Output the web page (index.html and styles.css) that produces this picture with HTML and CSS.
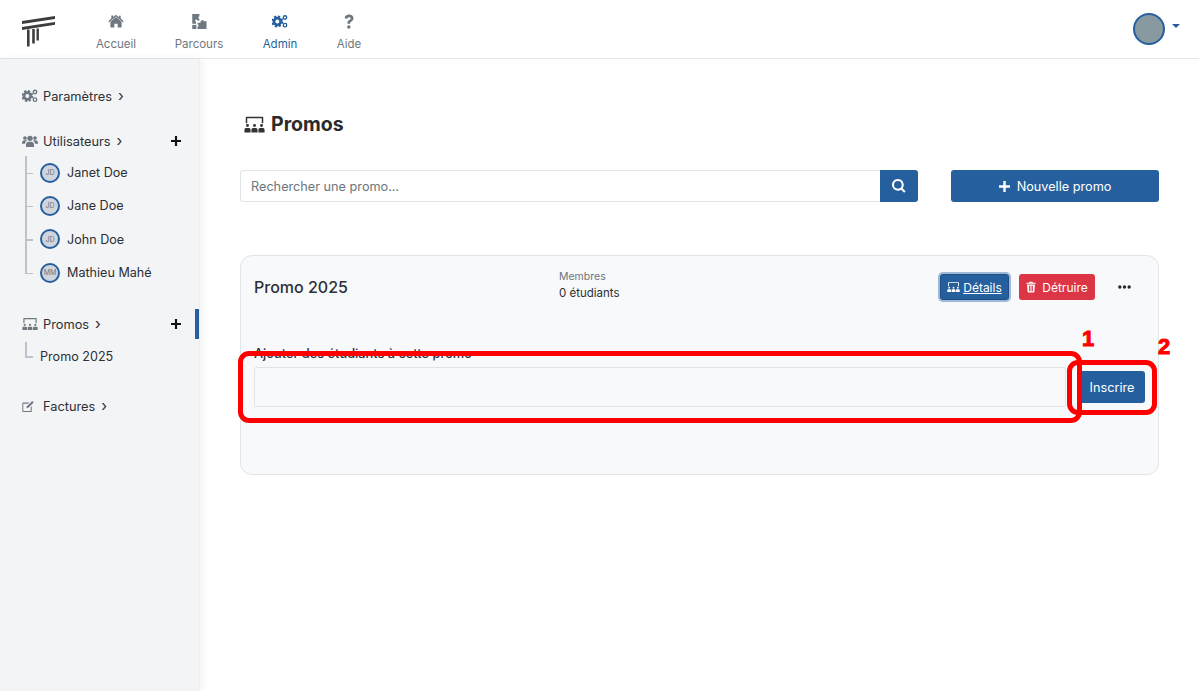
FILE: index.html
```html
<!DOCTYPE html>
<html lang="fr">
<head>
   <meta charset="UTF-8">
   <meta name="viewport" content="width=device-width, initial-scale=1.0">
   <title>Promos</title>
   <link rel="stylesheet" href="styles.css">
</head>
<body class="body">
   <svg class="icon-defs" aria-hidden="true">
      <symbol id="i-home" viewBox="0 0 24 20"><path d="M12 3.400 3.600 10.500V18a1 1 0 0 0 1 1h4.900v-5.600h5V19h4.900a1 1 0 0 0 1-1v-7.500Z"/><path d="M12 0 8 3.300V1.200H5v4.600L.4 9.700l1.300 1.500L12 2.600l10.300 8.600 1.300-1.500L19 5.800V1.500h-2.500v2.200Z" transform="translate(0 -.2)"/></symbol>
      <symbol id="i-route" viewBox="0 0 20 20"><path d="M1 0h9.500v3.500c-1.800-.4-1.800 3 0 2.700v2.300H7.500c.4-1.500-2.800-1.500-2.500 0 0 .8.300 1.500 1 2V13H1Z"/><path d="M12 9.500h1.300c-.4-1.800 3-1.800 2.800 0H20V20H8v-3.200c1.600.4 2.400-2.800 0-2.800V11.500h4Z"/><path d="M1 14.500h5.500V20H1Z"/></symbol>
      <symbol id="i-cogs" viewBox="0 0 24 20">
         <circle cx="8" cy="10" r="5" fill="none" stroke="currentColor" stroke-width="4"/>
         <circle cx="8" cy="10" r="7.500" fill="none" stroke="currentColor" stroke-width="3" stroke-dasharray="3.400 2.490"/>
         <circle cx="19.500" cy="4" r="2.600" fill="none" stroke="currentColor" stroke-width="2"/>
         <circle cx="19.500" cy="15.500" r="2.600" fill="none" stroke="currentColor" stroke-width="2"/>
      </symbol>
      <symbol id="i-help" viewBox="0 0 14 20"><path d="M1 5.600C1.600 2.400 4 .8 7.200.8c3.300 0 5.800 2 5.800 5 0 2.400-1.400 3.500-3 4.500-1 .6-1.300 1-1.300 1.900v.8H5v-1.200c0-1.800.8-2.800 2.200-3.700 1.200-.7 2-1.200 2-2.200 0-1.100-.9-1.700-2-1.700-1.300 0-2 .7-2.500 2.100Z"/><circle cx="6.800" cy="17.200" r="2.300"/></symbol>
      <symbol id="i-users" viewBox="0 0 24 18"><circle cx="4.500" cy="4.500" r="2.800"/><circle cx="19.500" cy="4.500" r="2.800"/><circle cx="12" cy="5" r="4"/><path d="M6 18v-3.500C6 11.500 8 10 10 10h4c2 0 4 1.500 4 4.500V18Z"/><path d="M0 12c0-2.500 1.500-4 3.500-4H6c.6 0 1 .2 1.500.5C5.800 9.500 4.700 11 4.400 13H0ZM24 12c0-2.500-1.500-4-3.500-4H18c-.6 0-1 .2-1.500.5 1.700 1 2.800 2.500 3.100 4.500H24Z"/></symbol>
      <symbol id="i-promo" viewBox="0 0 24 18">
         <path d="M3 0h18a1 1 0 0 1 1 1v6.500h-1.700V1.800H3.700V7.500H2V1a1 1 0 0 1 1-1Z"/>
         <circle cx="4" cy="10.200" r="1.700"/><circle cx="12" cy="10.200" r="1.700"/><circle cx="20" cy="10.200" r="1.700"/>
         <path d="M.5 18v-3c0-1.200.8-2 1.700-2h3.600c.9 0 1.700.8 1.700 2v3ZM8.500 18v-3c0-1.200.8-2 1.700-2h3.600c.9 0 1.700.8 1.700 2v3ZM16.500 18v-3c0-1.200.8-2 1.700-2h3.600c.9 0 1.700.8 1.700 2v3Z"/>
      </symbol>
      <symbol id="i-edit" viewBox="0 0 20 18"><path d="M2 3h9L9.500 4.600H2.700a.6.600 0 0 0-.7.700v10a.6.600 0 0 0 .7.700h10a.6.600 0 0 0 .7-.7V10l1.600-1.600v7.100A1.500 1.500 0 0 1 13.500 17.500h-11.500A1.500 1.500 0 0 1 .5 16V4.500A1.500 1.500 0 0 1 2 3Z"/><path d="M15.800.6 18 2.800 9.800 11l-2.800.6.600-2.800Z"/></symbol>
      <symbol id="i-trash" viewBox="0 0 14 16"><path d="M.5 2h3.800l.7-1.500h4L9.700 2h3.800v1.600H.5ZM1.500 4.600h11l-.8 10a1.200 1.200 0 0 1-1.200 1.100h-7a1.200 1.200 0 0 1-1.200-1.100Zm2.700 1.600v7.800h1.200V6.200Zm2.200 0v7.800h1.200V6.200Zm2.200 0v7.800h1.200V6.200Z" fill-rule="evenodd"/></symbol>
      <symbol id="i-search" viewBox="0 0 16 16"><path d="M6.700 0a6.700 6.700 0 0 1 5.400 10.600l3.500 3.500-1.700 1.700-3.500-3.500A6.700 6.700 0 1 1 6.700 0Zm0 2.300a4.400 4.400 0 1 0 0 8.800 4.400 4.400 0 0 0 0-8.800Z" fill-rule="evenodd"/></symbol>
      <symbol id="i-plus" viewBox="0 0 12 12"><path d="M4.700 0h2.600v4.700H12v2.600H7.300V12H4.700V7.300H0V4.700h4.700Z"/></symbol>
      <symbol id="i-dots" viewBox="0 0 14 4"><circle cx="2" cy="2" r="1.800"/><circle cx="7" cy="2" r="1.800"/><circle cx="12" cy="2" r="1.800"/></symbol>
      <symbol id="i-logo" viewBox="0 0 35 31"><path d="M1 5 34 0v3L1 8ZM1 11 34 6v2.800L1 14Z"/><path d="M6 13.500h2.600V30.500H6ZM11.200 13h2.600v14.500h-2.600ZM15.500 12.500h2.400V24.500h-2.400Z"/></symbol>
   </svg>

   <header class="topbar">
      <svg class="logo"><use href="#i-logo"/></svg>
      <nav class="topnav">
         <a class="topnav-item item-accueil"><svg class="topnav-icon"><use href="#i-home"/></svg>Accueil</a>
         <a class="topnav-item item-parcours"><svg class="topnav-icon"><use href="#i-route"/></svg>Parcours</a>
         <a class="topnav-item item-admin active"><svg class="topnav-icon"><use href="#i-cogs"/></svg>Admin</a>
         <a class="topnav-item item-aide"><svg class="topnav-icon"><use href="#i-help"/></svg>Aide</a>
      </nav>
      <div class="profile">
         <span class="profile-photo"></span>
         <span class="profile-caret"></span>
      </div>
   </header>

   <div class="layout">
      <aside class="sidebar">
         <div class="side-group group-settings">
            <div class="side-title"><svg class="side-icon"><use href="#i-cogs"/></svg>Paramètres<span class="chevron">›</span></div>
         </div>

         <div class="side-group group-users">
            <div class="side-title"><svg class="side-icon"><use href="#i-users"/></svg>Utilisateurs<span class="chevron">›</span><svg class="side-plus"><use href="#i-plus"/></svg></div>
            <ul class="tree">
               <li class="tree-row"><span class="avatar">JD</span>Janet Doe</li>
               <li class="tree-row"><span class="avatar">JD</span>Jane Doe</li>
               <li class="tree-row"><span class="avatar">JD</span>John Doe</li>
               <li class="tree-row"><span class="avatar">MM</span>Mathieu Mahé</li>
            </ul>
         </div>

         <div class="side-group group-promos">
            <span class="side-marker"></span>
            <div class="side-title"><svg class="side-icon"><use href="#i-promo"/></svg>Promos<span class="chevron">›</span><svg class="side-plus"><use href="#i-plus"/></svg></div>
            <ul class="tree tree-plain">
               <li class="tree-row">Promo 2025</li>
            </ul>
         </div>

         <div class="side-group group-bills">
            <div class="side-title"><svg class="side-icon icon-edit"><use href="#i-edit"/></svg>Factures<span class="chevron">›</span></div>
         </div>
      </aside>

      <main class="content">
         <h1 class="page-title"><svg class="page-icon"><use href="#i-promo"/></svg>Promos</h1>

         <div class="toolbar">
            <div class="search">
               <input class="search-input" type="text" placeholder="Rechercher une promo...">
               <button class="btn search-button"><svg class="icon-search"><use href="#i-search"/></svg></button>
            </div>
            <button class="btn new-button"><svg class="icon-plus"><use href="#i-plus"/></svg>Nouvelle promo</button>
         </div>

         <section class="card">
            <div class="card-head">
               <div class="card-name">Promo 2025</div>
               <div class="card-members">
                  <div class="members-label">Membres</div>
                  <div class="members-count">0 étudiants</div>
               </div>
               <div class="card-actions">
                  <button class="btn small-button details-button"><svg class="icon-small"><use href="#i-promo"/></svg><span class="underline">Détails</span></button>
                  <button class="btn small-button delete-button"><svg class="icon-trash"><use href="#i-trash"/></svg>Détruire</button>
                  <svg class="icon-dots"><use href="#i-dots"/></svg>
               </div>
            </div>

            <label class="enroll-label">Ajouter des étudiants à cette promo</label>
            <div class="enroll-row">
               <div class="enroll-input"></div>
               <button class="btn enroll-button">Inscrire</button>
            </div>
         </section>
      </main>
   </div>

   <!-- Red marks drawn over the screenshot -->
   <div class="mark mark-one"></div>
   <div class="mark mark-two"></div>
   <span class="mark-number number-one">1</span>
   <span class="mark-number number-two">2</span>
</body>
</html>
```

FILE: styles.css
```css
:root {
   --color-primary: #255f9e;
   --color-danger: #dc3545;
   --color-text: #212529;
   --color-muted: #6c757d;
   --color-mark: #fe0000;
   --background-side: #f3f4f6;
   --background-card: #f8f9fb;
   --border-light: #e1e4e8;
}

* { box-sizing: border-box; }

.body { margin: 0; height: 691px; overflow: hidden; background-color: white; color: var(--color-text); font-family: Inter, "Liberation Sans", sans-serif; font-size: 13px; }
.icon-defs { display: none; }
svg { fill: currentColor; }

/* top bar */
.topbar { display: flex; align-items: center; height: 59px; padding-left: 21px; border-bottom: 1px solid #e6e7ea; }
.logo { width: 35px; height: 31px; margin-top: 5px; color: #3d3d3d; }
.topnav { display: flex; margin-left: 40px; margin-top: 6px; }
.topnav-item { display: flex; flex-direction: column; align-items: center; color: #6f7780; font-size: 11.5px; line-height: 14px; }
.topnav-icon { width: 16px; height: 15px; margin-bottom: 8px; color: #6f7780; }
.item-accueil { width: 40px; }
.item-parcours { width: 48px; margin-left: 39px; }
.item-admin { width: 34px; margin-left: 40px; }
.item-aide { width: 24px; margin-left: 40px; }
.topnav-item.active, .topnav-item.active .topnav-icon { color: var(--color-primary); }
.profile { display: flex; align-items: center; margin-left: auto; padding-right: 19px; margin-top: -1px; }
.profile-photo { width: 32px; height: 32px; border-radius: 50%; background-color: #88999f; border: 2px solid var(--color-primary); }
.profile-caret { width: 0; height: 0; margin: -5px 0 0 7px; border-top: 4px solid var(--color-primary); border-left: 4px solid transparent; border-right: 4px solid transparent; }

/* sidebar */
.layout { display: flex; height: 632px; }
.sidebar { flex: 0 0 200px; padding-top: 28px; background-color: var(--background-side); border-right: 1px solid #eceef0; box-shadow: 2px 0 8px rgba(0, 0, 0, 0.06); }
.side-group { position: relative; }
.group-users { margin-top: 27px; }
.group-promos { margin-top: 26px; }
.group-bills { margin-top: 28px; }
.side-title { display: flex; align-items: center; height: 18px; padding-left: 22px; font-size: 12.800px; color: #2b3035; }
.side-icon { width: 16px; height: 14px; margin-right: 5px; color: #6f7780; }
.icon-edit { width: 13px; height: 13px; margin-right: 8px; }
.chevron { margin-left: 6px; font-size: 15px; line-height: 14px; }
.side-plus { width: 10px; height: 10px; margin-left: auto; margin-right: 18px; color: #111; }
.side-marker { position: absolute; right: 0; top: -6px; width: 4px; height: 30px; background-color: var(--color-primary); }
.tree { margin: 6px 0 0 0; padding: 0 0 0 40px; list-style: none; position: relative; }
.tree-row { display: flex; align-items: center; height: 33.300px; font-size: 12.600px; color: #2b3035; position: relative; }
.tree::before { content: ""; position: absolute; left: 25px; top: 0; bottom: 16px; width: 1.500px; background-color: #bcc3cc; }
.tree-row::before { content: ""; position: absolute; left: -15px; top: 50%; width: 8px; height: 1.500px; background-color: #bcc3cc; }
.tree-plain { margin-top: 10px; }
.tree-plain .tree-row { height: 26px; }
.tree-plain::before { bottom: 13px; top: -1px; }
.avatar { display: flex; align-items: center; justify-content: center; width: 20px; height: 20px; margin-right: 7px; border-radius: 50%; border: 2px solid var(--color-primary); background-color: #d0d5dd; color: #6c757d; font-size: 7px; }

/* main content */
.content { flex: 1; min-width: 0; padding: 54px 40px 0 40px; }
.page-title { display: flex; align-items: center; height: 22px; margin: 0 0 35px 4px; font-size: 19.500px; font-weight: 700; color: #2b2b2b; }
.page-icon { width: 21px; height: 17px; margin-right: 6px; color: #333; }
.toolbar { display: flex; justify-content: space-between; }
.search { display: flex; width: 678px; height: 32px; }
.search-input { flex: 1; min-width: 0; padding: 0 10px; border: 1px solid #dfe2e7; border-right: none; border-radius: 4px 0 0 4px; font-family: inherit; font-size: 12.700px; outline: none; }
.search-input::placeholder { color: #6c757d; opacity: 1; }
.btn { display: inline-flex; align-items: center; justify-content: center; border: none; border-radius: 3px; background-color: var(--color-primary); color: white; font-family: inherit; font-size: 12.700px; }
.search-button { width: 38px; border-radius: 0 3px 3px 0; }
.icon-search { width: 14px; height: 14px; }
.new-button { width: 208px; height: 32px; }
.icon-plus { width: 11px; height: 11px; margin-right: 7px; }

/* card */
.card { height: 220px; margin-top: 53px; padding: 0 13px; background-color: var(--background-card); border: 1px solid var(--border-light); border-radius: 12px; }
.card-head { display: flex; align-items: center; height: 62px; }
.card-name { width: 305px; font-size: 16px; font-weight: 500; color: #2b3035; }
.card-members { margin-top: -4px; }
.members-label { font-size: 10.500px; line-height: 13px; color: var(--color-muted); }
.members-count { margin-top: 3px; font-size: 11.500px; line-height: 14px; color: #2b3035; }
.card-actions { display: flex; align-items: center; margin-left: auto; padding-right: 14px; }
.small-button { height: 26px; font-size: 12px; }
.details-button { width: 69px; border: 1px solid #1d4f85; box-shadow: 0 0 0 2px #9fb8d6; }
.underline { text-decoration: underline; }
.icon-small { width: 13px; height: 10px; margin-right: 3px; }
.delete-button { width: 76px; margin-left: 10px; background-color: var(--color-danger); }
.icon-trash { width: 10px; height: 12px; margin-right: 6px; }
.icon-dots { width: 13px; height: 4px; margin-left: 23px; color: #212529; }
.enroll-label { display: block; margin-top: 29px; height: 13px; font-size: 12.800px; line-height: 13px; font-weight: 500; color: #2b3035; }
.enroll-row { display: flex; align-items: center; margin-top: 7px; }
.enroll-input { flex: 1; height: 40px; border: 1px solid #e3e4e6; border-radius: 2px; }
.enroll-button { width: 66px; height: 32px; margin-left: 13px; }

/* red marks */
.mark { position: absolute; border: 5px solid var(--color-mark); border-radius: 11px; }
.mark-one { left: 238px; top: 351px; width: 844px; height: 72px; }
.mark-two { left: 1067px; top: 360px; width: 90px; height: 55px; }
.mark-number { position: absolute; color: var(--color-mark); font-family: "Liberation Sans", sans-serif; font-size: 22px; font-weight: 700; line-height: 22px; -webkit-text-stroke: 1px var(--color-mark); }
.number-one { left: 1082px; top: 328px; }
.number-two { left: 1158px; top: 336px; }
```
